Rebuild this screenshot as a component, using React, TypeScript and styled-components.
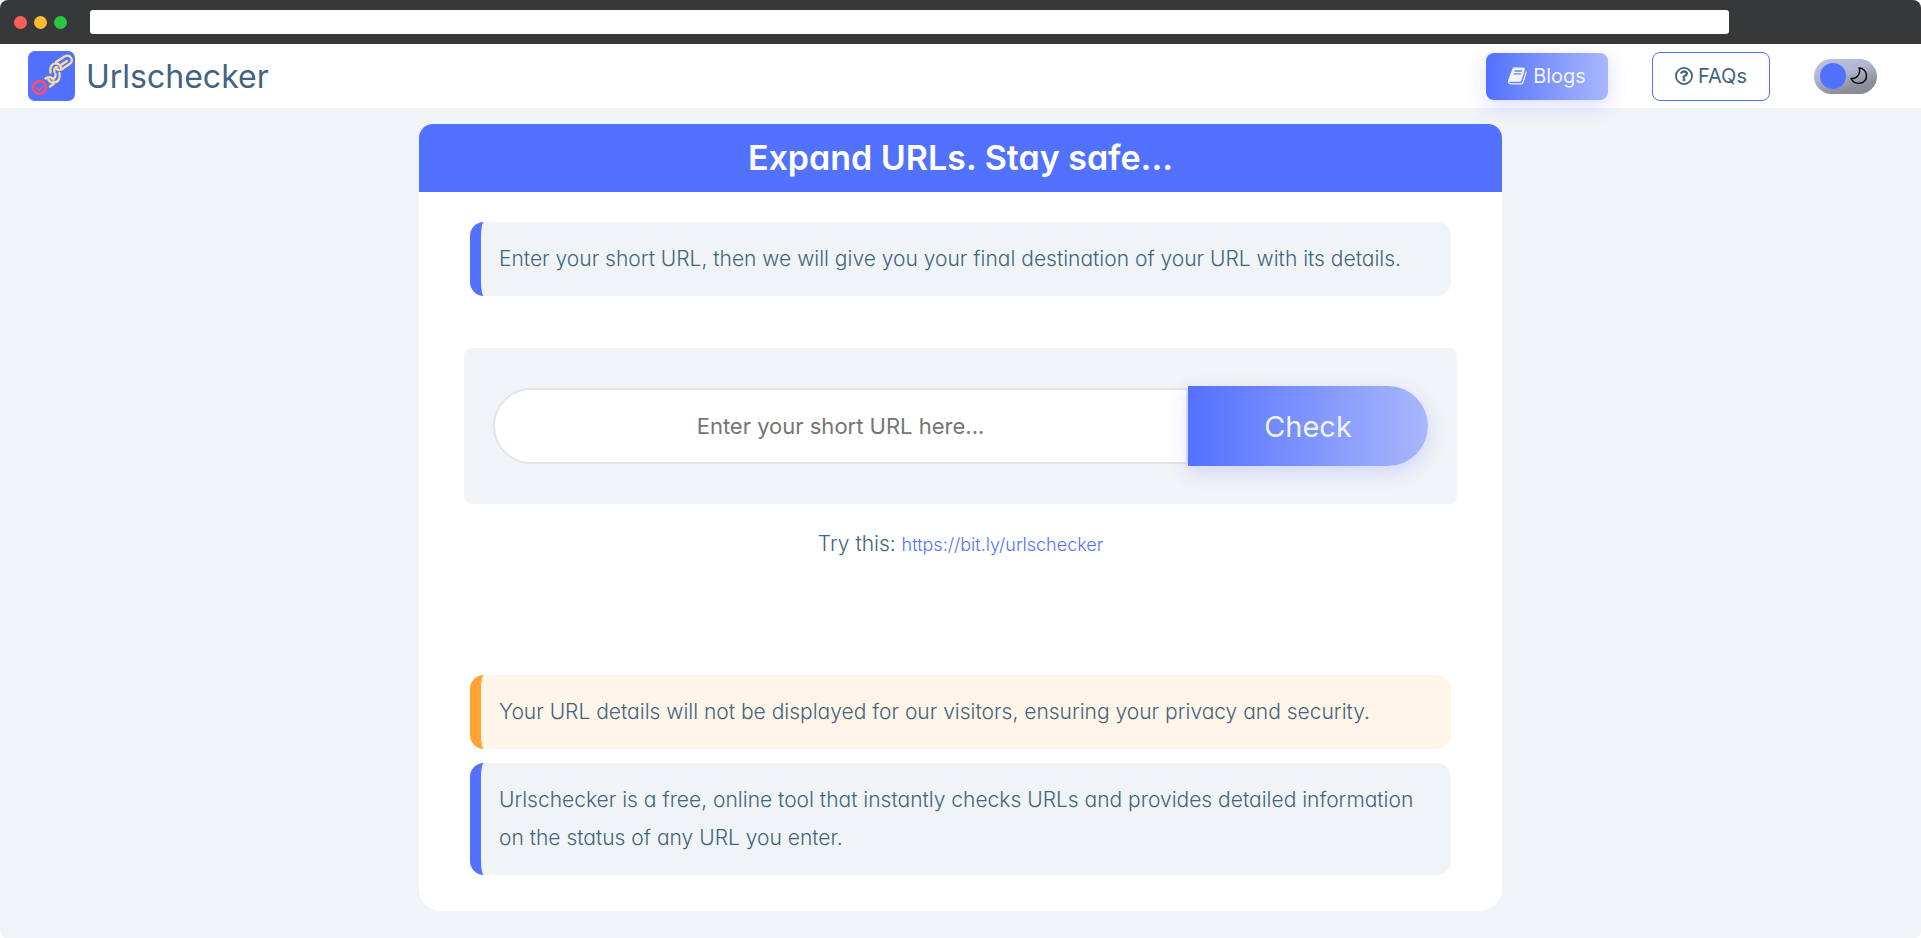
import React, { useState } from "react";
import styled, { createGlobalStyle } from "styled-components";

const color = {
  primary: "#5271ff",
  text: "#436480",
  surface: "#f0f4f7",
  white: "#ffffff",
  warn: "#ffa434",
  warnSurface: "#fff5e8",
  chrome: "#37383a",
};

const GlobalStyle = createGlobalStyle`
  *, *::before, *::after { box-sizing: border-box; }
  body {
    margin: 0;
    background: ${color.white};
    color: ${color.text};
    font-family: Inter, "Liberation Sans", sans-serif;
    font-feature-settings: "cv11";
    font-size: 21px;
    font-weight: 300;
  }
  button, input { font: inherit; font-feature-settings: inherit; }
`;

const Window = styled.div`
  min-height: 100vh;
  border-radius: 8px;
  overflow: hidden;
  background: ${color.surface};
`;

const Chrome = styled.div`
  display: flex;
  align-items: center;
  height: 44px;
  padding: 0 10% 0 14px;
  background: ${color.chrome};
`;

const Dots = styled.div`
  display: flex;
  gap: 7px;
  margin-right: 23px;
`;

const Dot = styled.span<{ $fill: string }>`
  width: 13px;
  height: 13px;
  border-radius: 50%;
  background: ${(p) => p.$fill};
`;

const Address = styled.input`
  flex: 1;
  min-width: 0;
  height: 24px;
  padding: 0 8px;
  border: 0;
  border-radius: 3px;
  background: ${color.white};
  font-size: 14px;
`;

const Header = styled.header`
  display: flex;
  align-items: center;
  justify-content: space-between;
  height: 64px;
  padding: 0 44px 0 28px;
  background: ${color.white};
`;

const Brand = styled.a`
  display: flex;
  align-items: center;
  gap: 11px;
  color: ${color.text};
  font-size: 32px;
  font-weight: 400;
  text-decoration: none;
`;

const Nav = styled.nav`
  display: flex;
  align-items: center;
  gap: 44px;
`;

const NavLink = styled.a<{ $filled?: boolean }>`
  display: flex;
  align-items: center;
  justify-content: center;
  gap: 5px;
  width: ${(p) => (p.$filled ? 122 : 118)}px;
  height: ${(p) => (p.$filled ? 47 : 49)}px;
  border: ${(p) => (p.$filled ? "0" : `1px solid ${color.primary}`)};
  border-radius: 8px;
  background: ${(p) =>
    p.$filled ? `linear-gradient(90deg, ${color.primary}, #a9b7fb)` : color.white};
  box-shadow: ${(p) => (p.$filled ? "0 6px 20px rgba(82, 82, 255, 0.2)" : "none")};
  color: ${(p) => (p.$filled ? color.surface : color.text)};
  font-size: 20px;
  font-weight: 400;
  text-decoration: none;
`;

const Toggle = styled.label`
  display: flex;
  align-items: center;
  gap: 4px;
  width: 63px;
  height: 35px;
  padding: 0 6px;
  border-radius: 18px;
  background: linear-gradient(165deg, #b9c0e0 0%, #b2b7d0 40%, #8d8f9a 75%, #868894 100%);
  cursor: pointer;
`;

const ToggleInput = styled.input`
  appearance: none;
  width: 26px;
  height: 26px;
  margin: 0;
  border-radius: 50%;
  background: ${color.primary};
  cursor: pointer;
`;

const Card = styled.main`
  max-width: 1083px;
  margin: 16px auto 28px;
  border-radius: 14px 14px 22px 22px;
  overflow: hidden;
  background: ${color.white};
`;

const Title = styled.h1`
  margin: 0;
  padding: 14px;
  background: ${color.primary};
  color: ${color.white};
  font-size: 34px;
  font-weight: 600;
  line-height: 40px;
  text-align: center;
`;

const Content = styled.div`
  display: flex;
  flex-direction: column;
  padding: 30px 45px 36px;
`;

const Notice = styled.p<{ $warn?: boolean }>`
  margin: 0 6px;
  padding: 18px;
  border-left: 11px solid ${(p) => (p.$warn ? color.warn : color.primary)};
  border-radius: 14px;
  background: ${(p) => (p.$warn ? color.warnSurface : color.surface)};
  line-height: 38px;
`;

const CheckForm = styled.form`
  display: flex;
  align-items: center;
  margin-top: 52px;
  padding: 38px 29px;
  border-radius: 8px;
  background: ${color.surface};
`;

const UrlInput = styled.input`
  flex: 1;
  min-width: 0;
  height: 76px;
  padding: 0 24px;
  border: 2px solid #e0e5ea;
  border-radius: 38px 0 0 38px;
  background: ${color.white};
  color: ${color.text};
  font-size: 22px;
  font-weight: 400;
  text-align: center;
  &::placeholder { color: #757575; opacity: 1; }
`;

const CheckButton = styled.button`
  width: 240px;
  height: 80px;
  border: 0;
  border-radius: 0 40px 40px 0;
  background: linear-gradient(90deg, ${color.primary}, #a9b7fb);
  box-shadow: 0 6px 20px rgba(82, 82, 255, 0.2);
  color: ${color.surface};
  font-size: 29px;
  font-weight: 400;
  cursor: pointer;
`;

const Example = styled.p`
  margin: 24px 0 114px;
  line-height: 32px;
  text-align: center;
`;

const ExampleLink = styled.a`
  color: ${color.primary};
  font-size: 18px;
  text-decoration: none;
`;

const Notices = styled.div`
  display: flex;
  flex-direction: column;
  gap: 14px;
`;

const Logo = () => (
  <svg width="47" height="50" viewBox="0 0 47 50" aria-hidden="true">
    <rect width="47" height="50" rx="7" fill={color.primary} />
    <g fill="none" stroke="#f7dda0" strokeWidth="2.3" strokeLinecap="round" strokeLinejoin="round">
      <path d="M28 11L36.500 5.500c6-3 10 4 5 7.500l-8 5.500c-2 1-4 .5-5.500-1M32 14.500l7-4.500" />
      <path d="M22.500 21.500c-1-6 2-9.500 6-9 3 .5 5 3 4.500 5M26.500 21c-1-3 .5-5.500 3-4.500" />
      <path d="M31.500 22c1 6-1.500 9.500-6 9.500-3 0-5-2-5.500-4M27.500 23c.5 3-1 5-3.500 4.500" />
      <path d="M17.500 27.500c3-2.500 6.500-1.500 8 1.500M22 35.500l3.500-2.500" />
    </g>
    <circle cx="11.500" cy="36.500" r="6.500" fill={color.primary} stroke="#f4516c" strokeWidth="2.600" />
    <path d="M8 36.500l3 3 4.500-5" fill="none" stroke="#f4516c" strokeWidth="1.800" />
  </svg>
);

const BookIcon = () => (
  <svg width="20" height="20" viewBox="0 0 1792 1792" fill="currentColor" aria-hidden="true">
    <path d="M1639 478q40 57 18 129l-275 906q-19 64-76.500 107.500t-122.500 43.500h-923q-77 0-148.500-53.500t-99.500-131.500q-24-67-2-127 0-4 3-27t4-37q1-8-3-21.500t-3-19.500q2-11 8-21t16.500-23.500 16.500-23.500q23-38 45-91.500t30-91.500q3-10 .5-30t-.5-28q3-11 17-28t17-23q21-36 42-92t25-90q1-9-2.500-32t.5-28q4-13 22-30.500t22-22.500q19-26 42.500-84.500t27.500-96.500q1-8-3-25.500t-2-26.500q2-8 9-18t18-23 17-21q8-12 16.500-30.500t15-35 16-36 19.500-32 26.500-23.500 36-11.500 47.500 5.500l-1 3q38-9 51-9h761q74 0 114 56t18 130l-274 906q-36 119-71.500 153.500t-128.500 34.500h-869q-27 0-38 15-11 16-1 43 24 70 144 70h923q29 0 56-15.500t35-41.500l300-987q7-22 5-57 38 15 59 43zm-1064 2q-4 13 2 22.500t20 9.500h608q13 0 25.500-9.500t16.500-22.500l21-64q4-13-2-22.500t-20-9.500h-608q-13 0-25.500 9.500t-16.500 22.500zm-83 256q-4 13 2 22.500t20 9.500h608q13 0 25.500-9.500t16.500-22.500l21-64q4-13-2-22.500t-20-9.500h-608q-13 0-25.500 9.500t-16.500 22.500z" />
  </svg>
);

const QuestionIcon = () => (
  <svg width="18" height="18" viewBox="0 0 1536 1536" fill="currentColor" aria-hidden="true">
    <circle cx="768" cy="768" r="690" fill="none" stroke="currentColor" strokeWidth="156" />
    <path transform="translate(0 -60)" d="M880 1072v160q0 14-9 23t-23 9h-160q-14 0-23-9t-9-23v-160q0-14 9-23t23-9h160q14 0 23 9t9 23zm216-432q0 50-15 90t-45.500 69-52 44-59.500 36q-32 18-46.500 28t-26 24-11.500 29v32q0 14-9 23t-23 9h-128q-14 0-23-9t-9-23v-68q0-35 10.500-64.500t24-47.500 39-35.500 41-25.500 44.500-21q53-25 75-43t22-49q0-42-43.500-71.500t-95.500-29.500q-56 0-95 27-29 20-80 83-9 12-25 12-11 0-19-6l-108-82q-10-7-12-20t5-23q122-192 349-192 129 0 238.500 89.500t109.500 214.500z" />
  </svg>
);

const MoonIcon = () => (
  <svg width="18" height="18" viewBox="0 0 18 18" aria-hidden="true">
    <path
      d="M9 1c2 5-1.500 11-8 10.500C4.500 18.500 16.500 18 16.500 8.500 16.500 4.500 13 1 9 1z"
      fill="none"
      stroke="#000"
      strokeWidth="1.400"
      strokeLinejoin="round"
    />
  </svg>
);

export default function App() {
  const [light, setLight] = useState(false);
  const [url, setUrl] = useState("");
  return (
    <>
      <GlobalStyle />
      <Window>
        <Chrome>
          <Dots>
            <Dot $fill="#ff5f57" />
            <Dot $fill="#febc2e" />
            <Dot $fill="#28c840" />
          </Dots>
          <Address aria-label="Address" />
        </Chrome>
        <Header>
          <Brand href="#">
            <Logo />
            Urlschecker
          </Brand>
          <Nav>
            <NavLink href="#blogs" $filled>
              <BookIcon />
              Blogs
            </NavLink>
            <NavLink href="#faqs">
              <QuestionIcon />
              FAQs
            </NavLink>
            <Toggle>
              <ToggleInput
                type="checkbox"
                aria-label="Dark mode"
                checked={light}
                onChange={(e) => setLight(e.target.checked)}
              />
              <MoonIcon />
            </Toggle>
          </Nav>
        </Header>
        <Card>
          <Title>Expand URLs. Stay safe...</Title>
          <Content>
            <Notice>
              Enter your short URL, then we will give you your final destination of your URL with its details.
            </Notice>
            <CheckForm onSubmit={(e) => e.preventDefault()}>
              <UrlInput
                aria-label="Short URL"
                placeholder="Enter your short URL here..."
                value={url}
                onChange={(e) => setUrl(e.target.value)}
              />
              <CheckButton type="submit">Check</CheckButton>
            </CheckForm>
            <Example>
              Try this: <ExampleLink href="https://bit.ly/urlschecker">https://bit.ly/urlschecker</ExampleLink>
            </Example>
            <Notices>
              <Notice $warn>
                Your URL details will not be displayed for our visitors, ensuring your privacy and security.
              </Notice>
              <Notice>
                Urlschecker is a free, online tool that instantly checks URLs and provides detailed information on the
                status of any URL you enter.
              </Notice>
            </Notices>
          </Content>
        </Card>
      </Window>
    </>
  );
}
